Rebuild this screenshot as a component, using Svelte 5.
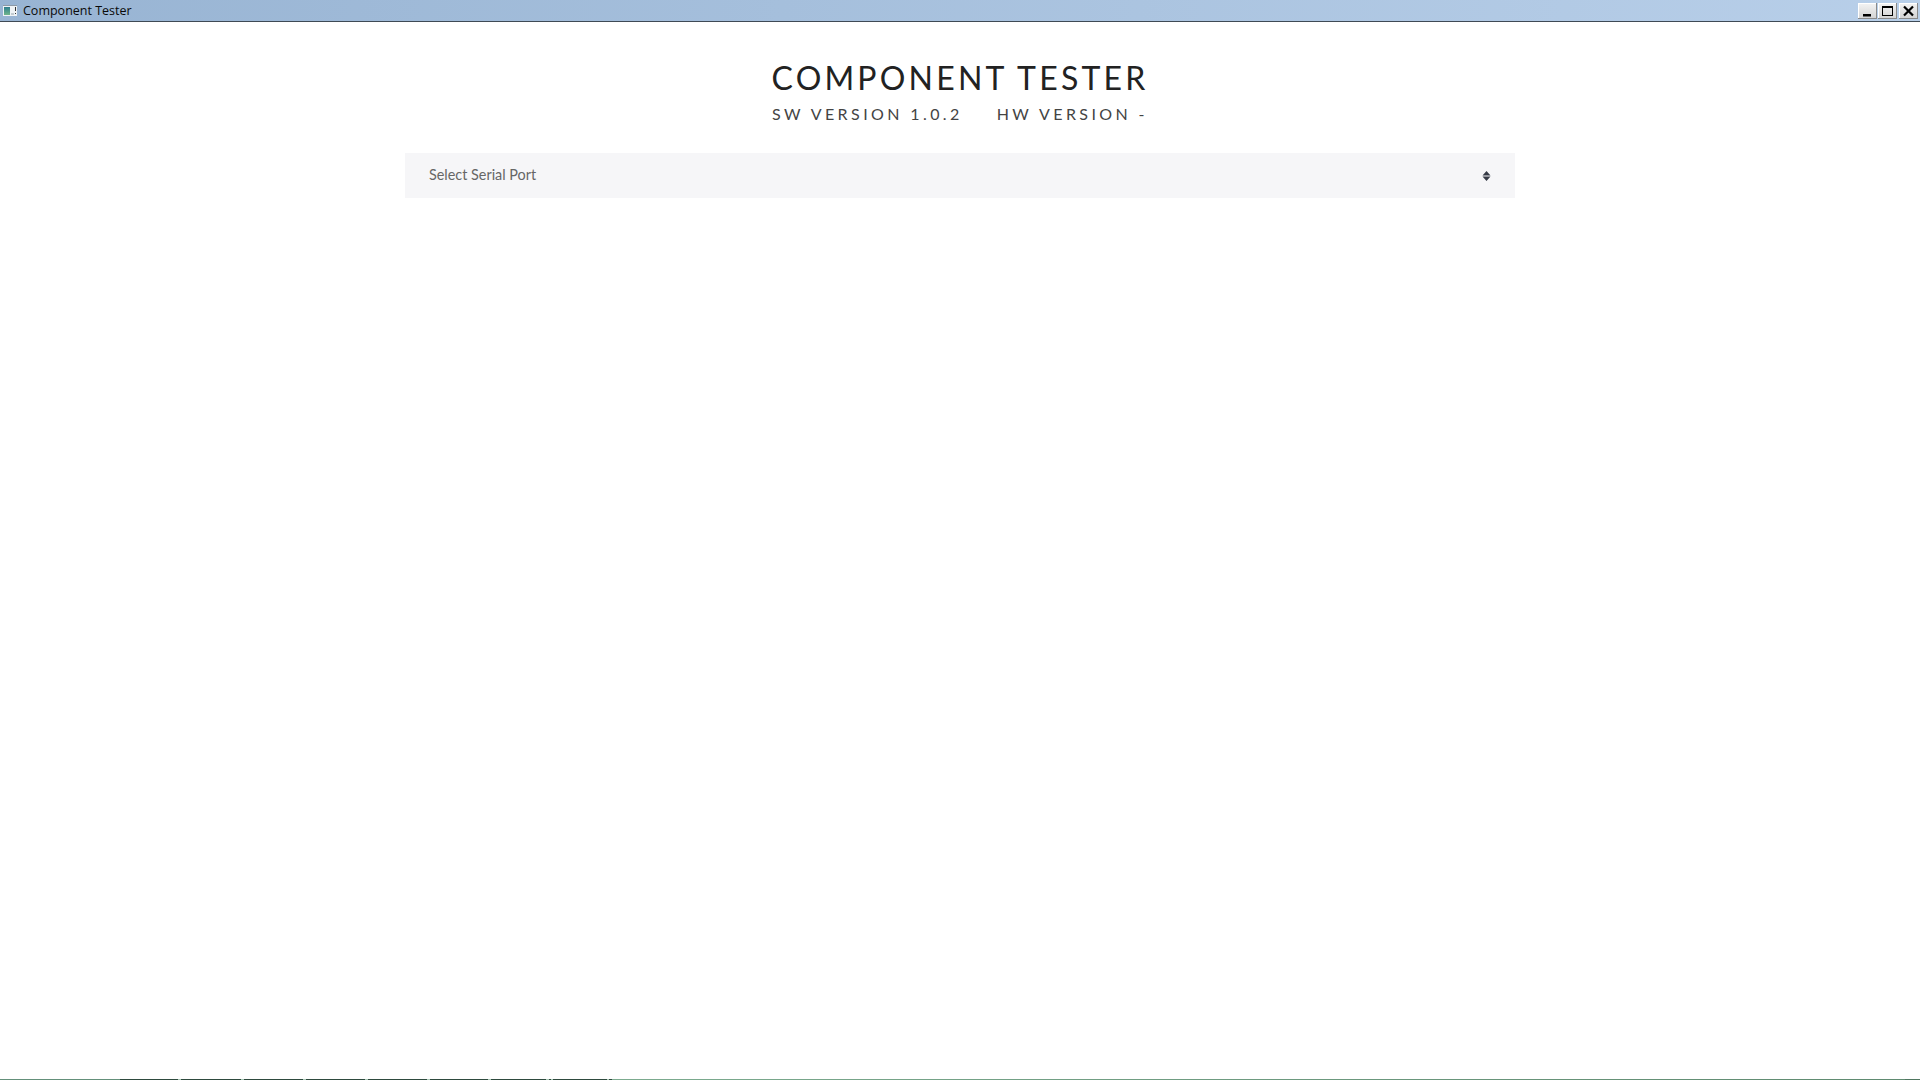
<script>
  const dark = '#2e4a3e';
  const tick = '#a9c9b6';
  const bottomSegments = [
    { w: 120, c: '#64907a' },
    { w: 58, c: dark }, { w: 3, c: tick },
    { w: 60, c: dark }, { w: 3, c: tick },
    { w: 59, c: dark }, { w: 3, c: tick },
    { w: 59, c: dark }, { w: 3, c: tick },
    { w: 59, c: dark }, { w: 3, c: tick },
    { w: 58, c: dark }, { w: 3, c: tick },
    { w: 55, c: dark }, { w: 3, c: tick },
    { w: 2, c: dark }, { w: 2, c: tick },
    { w: 54, c: dark }, { w: 2, c: tick },
    { w: 3, c: dark }
  ];
</script>

<div class="window">
  <header class="titlebar">
    <div class="title-left">
      <svg class="app-icon" width="14" height="11" viewBox="0 0 14 11">
        <defs>
          <linearGradient id="tile" x1="0" y1="0" x2="0" y2="1">
            <stop offset="0" stop-color="#2f7f8f" />
            <stop offset="1" stop-color="#6fb58a" />
          </linearGradient>
        </defs>
        <rect width="14" height="11" fill="#eef2f5" />
        <rect x="0" y="0" width="14" height="1" fill="#8d99a6" />
        <rect x="1" y="2" width="6" height="8" fill="url(#tile)" />
        <rect x="8" y="8" width="3" height="2" fill="#c4ccd2" />
        <rect x="12" y="2" width="1" height="4" fill="#333" />
        <rect x="12" y="8" width="1" height="1" fill="#333" />
      </svg>
      <span class="title-text">Component Tester</span>
    </div>
    <div class="controls">
      <div class="ctl">
        <svg width="19" height="16" viewBox="0 0 19 16"><rect x="5" y="11" width="8" height="2.5" fill="#000" /></svg>
      </div>
      <div class="ctl">
        <svg width="19" height="16" viewBox="0 0 19 16"><rect x="4.5" y="3.5" width="10" height="9" fill="none" stroke="#000" /><rect x="4" y="3" width="11" height="2" fill="#000" /></svg>
      </div>
      <div class="ctl">
        <svg width="19" height="16" viewBox="0 0 19 16"><path d="M5 3.5 L14 12.5 M14 3.5 L5 12.5" stroke="#000" stroke-width="2.2" /></svg>
      </div>
    </div>
  </header>

  <main class="content">
    <h1>COMPONENT TESTER</h1>
    <div class="versions">
      <span>SW VERSION 1.0.2</span>
      <span>HW VERSION -</span>
    </div>
    <div class="select">
      <span class="placeholder">Select Serial Port</span>
      <svg width="9" height="10" viewBox="0 0 9 10"><path d="M4.5 0 L8.5 4.4 H0.5 Z M0.5 5.6 H8.5 L4.5 10 Z" fill="#363b46" /></svg>
    </div>
  </main>

  <footer class="strip">
    {#each bottomSegments as s}
      <i style="width:{s.w}px;background:{s.c}"></i>
    {/each}
    <b></b>
  </footer>
</div>

<style>
  :global(body) { margin: 0; background: #fff; }
  .window {
    width: 1920px; height: 1080px; display: flex; flex-direction: column;
    font-family: "Lato", sans-serif; overflow: hidden;
  }
  .titlebar {
    height: 21px; flex: none; display: flex; justify-content: space-between;
    background: linear-gradient(90deg, #98b4d3, #b8cfe9);
    border-bottom: 1px solid #3f4a55;
  }
  .title-left { display: flex; align-items: center; gap: 6px; padding-left: 3px; }
  .title-text { font-size: 12.5px; color: #0a0a0a; font-family: "Open Sans", sans-serif; }
  .controls { display: flex; gap: 1px; padding: 3px 2px 0 0; }
  .ctl {
    width: 19px; height: 16px; background: linear-gradient(#f4f4f4, #d2d2d2);
    box-shadow: inset -1px -1px 0 #8a8a8a, inset 1px 1px 0 #fff;
  }
  .ctl:last-child { margin-left: 1px; }
  .ctl svg { display: block; }
  .content { flex: 1; display: flex; flex-direction: column; align-items: center; padding-top: 32px; }
  h1 {
    margin: 0; font-size: 32px; line-height: 48px; font-weight: 400;
    letter-spacing: 3.2px; color: #222;
  }
  .versions {
    display: flex; gap: 34px; margin-top: 0; font-size: 16px; line-height: 24px;
    letter-spacing: 3.4px; color: #444;
  }
  .select {
    box-sizing: border-box; width: 1110px; height: 45px; margin-top: 27px; padding: 0 24px 0 24px;
    background: #f6f6f8; display: flex; align-items: center; justify-content: space-between;
  }
  .placeholder { font-size: 14.4px; color: #666; position: relative; top: -1px; }
  .strip {
    height: 1px; flex: none; display: flex; width: 100%;
    background: linear-gradient(90deg, #7dac90 30%, #5f8a70 100%);
  }
  .strip i { display: block; height: 1px; }
  .strip b { display: block; height: 1px; width: 15px; margin-left: auto; background: #4f7660; }
</style>
